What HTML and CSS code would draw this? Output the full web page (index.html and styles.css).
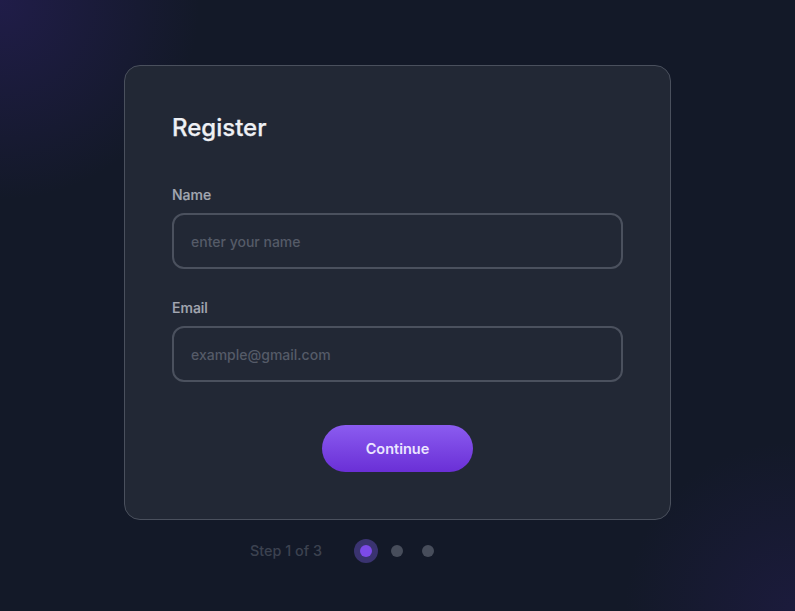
FILE: index.html
```html
<!DOCTYPE html>
<html lang="en">
<head>
<meta charset="utf-8">
<title>Register</title>
<link rel="stylesheet" href="styles.css">
</head>
<body>
<main class="page">
  <section class="card">
    <h1 class="title">Register</h1>
    <div class="field">
      <label class="label" for="name">Name</label>
      <input class="input" id="name" type="text" placeholder="enter your name">
    </div>
    <div class="field">
      <label class="label" for="email">Email</label>
      <input class="input" id="email" type="email" placeholder="example@gmail.com">
    </div>
    <div class="actions">
      <button class="btn" type="button">Continue</button>
    </div>
  </section>
  <div class="steps">
    <span class="step-text">Step 1 of 3</span>
    <div class="dots">
      <span class="dot dot-active"></span>
      <span class="dot"></span>
      <span class="dot"></span>
    </div>
    <span class="spacer"></span>
  </div>
</main>
</body>
</html>
```

FILE: styles.css
```css
* { box-sizing: border-box; }
html, body { margin: 0; height: 100%; }
body {
  font-family: Inter, "Noto Sans", sans-serif;
  background:
    radial-gradient(circle at 0 0, rgba(45, 32, 105, 0.5) 0, rgba(45, 32, 105, 0) 200px),
    radial-gradient(circle at 100% 100%, rgba(40, 30, 90, 0.4) 0, rgba(40, 30, 90, 0) 170px),
    #131928;
  color: #e5e7eb;
}
.page {
  display: flex;
  flex-direction: column;
  align-items: center;
  padding-top: 65px;
}
.card {
  width: 547px;
  height: 455px;
  background: #222835;
  border: 1px solid #4a505d;
  border-radius: 16px;
  padding: 46px 47px 0;
}
.title {
  margin: 0 0 41px;
  font-size: 24px;
  line-height: 32px;
  font-weight: 500;
  color: #eef0f4;
  -webkit-text-stroke: 0.25px #eef0f4;
}
.field { display: flex; flex-direction: column; margin-bottom: 29px; }
.label {
  font-size: 14px;
  line-height: 20px;
  font-weight: 500;
  color: #a3a7b1;
  margin-bottom: 8px;
  -webkit-text-stroke: 0.2px #a3a7b1;
}
.input {
  width: 451px;
  height: 56px;
  border: 2px solid #4b515e;
  border-radius: 12px;
  background: transparent;
  padding: 0 17px;
  font-family: inherit;
  font-size: 14px;
  font-weight: 500;
  color: #e5e7eb;
  outline: none;
}
.input::placeholder { color: #555b68; }
.actions { display: flex; justify-content: center; padding-top: 14px; }
.btn {
  width: 151px;
  height: 47px;
  border: none;
  border-radius: 24px;
  background: linear-gradient(180deg, #8b5cf0 0%, #6a2fd6 100%);
  color: #ebe6ff;
  font-family: inherit;
  font-size: 14.5px;
  font-weight: 600;
}
.steps {
  display: grid;
  grid-template-columns: 1fr auto 1fr;
  align-items: center;
  column-gap: 38px;
  width: 547px;
  padding-right: 1px;
  margin-top: 22px;
}
.step-text {
  justify-self: end;
  font-size: 14.4px;
  font-weight: 500;
  color: #3c4250;
}
.dots { display: flex; align-items: center; gap: 19px; }
.dot {
  width: 12px;
  height: 12px;
  border-radius: 50%;
  background: #474d5b;
}
.dot-active {
  background: #7c4ae8;
  box-shadow: 0 0 0 6px #3a3370;
}
```
